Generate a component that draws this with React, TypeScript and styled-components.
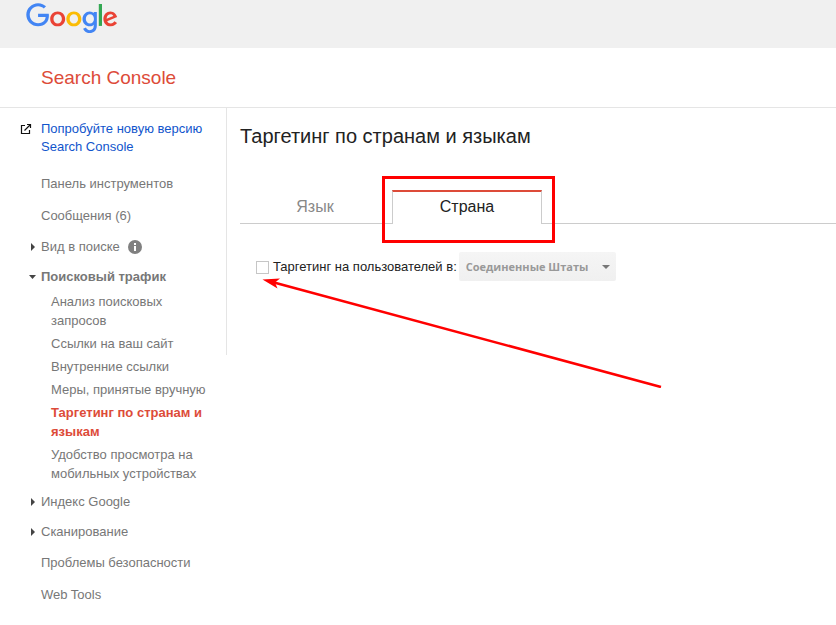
import React from "react";
import styled, { createGlobalStyle } from "styled-components";

const GlobalStyle = createGlobalStyle`
  *, *::before, *::after { box-sizing: border-box; }
  body {
    margin: 0;
    background: #fff;
    color: #222;
    font-family: "Liberation Sans", Arial, sans-serif;
    font-size: 13px;
  }
`;

const TopBar = styled.header`
  height: 48px;
  padding: 3px 26px;
  background: #f0f0f0;
`;

const LogoLink = styled.a`
  display: inline-block;
  svg { display: block; }
`;

const ProductBar = styled.div`
  height: 60px;
  padding: 0 41px;
  display: flex;
  align-items: center;
  border-bottom: 1px solid #e5e5e5;
`;

const ProductName = styled.a`
  color: #dd4b39;
  font-size: 19px;
  line-height: 24px;
  text-decoration: none;
`;

const Body = styled.div`
  display: flex;
  align-items: flex-start;
`;

const Sidebar = styled.nav`
  flex: 0 0 226px;
  padding: 12px 16px 14px 20px;
`;

const NewVersion = styled.a`
  display: flex;
  align-items: flex-start;
  gap: 9px;
  margin-bottom: 12px;
  color: #15c;
  line-height: 18px;
  text-decoration: none;
  svg { flex: none; margin-top: 3px; }
`;

const List = styled.ul`
  margin: 0;
  padding: 0;
  list-style: none;
`;

const SubList = styled(List)`
  display: flex;
  flex-direction: column;
  gap: 4px;
  padding: 0 0 4px 31px;
`;

const PlainLink = styled.a`
  display: block;
  padding-left: 21px;
  color: #777;
  line-height: 32px;
  text-decoration: none;
`;

const SubLink = styled.a<{ $current?: boolean }>`
  display: block;
  color: ${(p) => (p.$current ? "#dd4b39" : "#777")};
  font-weight: ${(p) => (p.$current ? "bold" : "normal")};
  line-height: 19px;
  text-decoration: none;
`;

const GroupRow = styled.div`
  display: flex;
  align-items: center;
  gap: 8px;
  height: 30px;
`;

const GroupButton = styled.button<{ $open?: boolean }>`
  display: flex;
  align-items: center;
  gap: 4px;
  padding: 0 0 0 8px;
  border: 0;
  background: none;
  color: #777;
  font: inherit;
  font-weight: ${(p) => (p.$open ? "bold" : "normal")};
  line-height: 30px;
  cursor: pointer;
`;

const Main = styled.main`
  position: relative;
  flex: 1;
  min-width: 0;
  min-height: 247px;
  padding: 16px 0 0 13px;
  border-left: 1px solid #e5e5e5;
`;

const Title = styled.h1`
  margin: 0 0 42px;
  font-size: 20px;
  font-weight: normal;
  line-height: 24px;
`;

const Tabs = styled.div`
  display: flex;
  gap: 2px;
  height: 34px;
  box-shadow: inset 0 -1px #ccc;
`;

const Tab = styled.button<{ $selected?: boolean }>`
  flex: 0 0 150px;
  padding: 0 0 2px;
  border: solid transparent;
  border-width: 2px 1px 0;
  border-color: ${(p) => (p.$selected ? "#dd4b39 #ccc" : "transparent")};
  background: ${(p) => (p.$selected ? "#fff" : "none")};
  color: ${(p) => (p.$selected ? "#222" : "#888")};
  font: 16px/28px "Liberation Sans", Arial, sans-serif;
  cursor: pointer;
`;

const TargetRow = styled.div`
  display: flex;
  align-items: center;
  gap: 4px;
  padding: 28px 16px 0;
`;

const Checkbox = styled.input`
  appearance: none;
  flex: none;
  width: 13px;
  height: 13px;
  margin: 2px 0 0;
  border: 1px solid #c6c6c6;
  background: #fff;
`;

const SelectFrame = styled.span`
  display: grid;
  align-items: center;
  height: 29px;
  margin-left: -2px;
  border-radius: 2px;
  background: linear-gradient(#f5f5f5, #f0f0f0);
  svg { grid-area: 1 / 1; justify-self: end; margin-right: 6px; pointer-events: none; }
`;

const Select = styled.select`
  grid-area: 1 / 1;
  appearance: none;
  width: 157px;
  height: 29px;
  padding: 0 28px 0 7px;
  border: 0;
  background: none;
  color: #999;
  opacity: 1;
  font: bold 11px "Open Sans", "Noto Sans", sans-serif;
`;

const Highlight = styled.div`
  position: absolute;
  top: 68px;
  left: 155px;
  width: 173px;
  height: 67px;
  border: 3px solid #f00;
  pointer-events: none;
`;

const Pointer = styled.svg`
  position: absolute;
  top: 162px;
  left: 33px;
  pointer-events: none;
`;

function GoogleLogo() {
  return (
    <svg width="92" height="31" viewBox="0 0 272 92" role="img" aria-label="Google">
      <path fill="#EA4335" d="M115.75 47.18c0 12.77-9.99 22.18-22.25 22.18s-22.25-9.41-22.25-22.18C71.25 34.32 81.24 25 93.5 25s22.25 9.32 22.25 22.18zm-9.74 0c0-7.98-5.79-13.44-12.51-13.44S80.99 39.2 80.99 47.18c0 7.9 5.79 13.44 12.51 13.44s12.51-5.55 12.51-13.44z" />
      <path fill="#FBBC05" d="M163.75 47.18c0 12.77-9.99 22.18-22.25 22.18s-22.25-9.41-22.25-22.18c0-12.85 9.99-22.18 22.25-22.18s22.25 9.32 22.25 22.18zm-9.74 0c0-7.98-5.79-13.44-12.51-13.44s-12.51 5.46-12.51 13.44c0 7.9 5.79 13.44 12.51 13.44s12.51-5.55 12.51-13.44z" />
      <path fill="#4285F4" d="M209.75 26.34v39.82c0 16.38-9.66 23.07-21.08 23.07-10.75 0-17.22-7.19-19.66-13.07l8.48-3.53c1.51 3.61 5.21 7.87 11.17 7.87 7.31 0 11.84-4.51 11.84-13v-3.19h-.34c-2.18 2.69-6.38 5.04-11.68 5.04-11.09 0-21.25-9.66-21.25-22.09 0-12.52 10.16-22.26 21.25-22.26 5.29 0 9.49 2.35 11.68 4.96h.34v-3.61h9.25zm-8.56 20.92c0-7.81-5.21-13.52-11.84-13.52-6.72 0-12.35 5.71-12.35 13.52 0 7.73 5.63 13.36 12.35 13.36 6.63 0 11.84-5.63 11.84-13.36z" />
      <path fill="#34A853" d="M225 3v65h-9.5V3h9.5z" />
      <path fill="#EA4335" d="M262.02 54.48l7.56 5.04c-2.44 3.61-8.32 9.83-18.48 9.83-12.6 0-22.01-9.74-22.01-22.18 0-13.19 9.49-22.18 20.92-22.18 11.51 0 17.14 9.16 18.98 14.11l1.01 2.52-29.65 12.28c2.27 4.45 5.8 6.72 10.75 6.72 4.96 0 8.4-2.44 10.92-6.14zm-23.27-7.98l19.82-8.23c-1.09-2.77-4.37-4.7-8.23-4.7-4.95 0-11.84 4.37-11.59 12.93z" />
      <path fill="#4285F4" d="M35.29 41.41V32H67c.31 1.64.47 3.58.47 5.68 0 7.06-1.93 15.79-8.15 22.01-6.05 6.3-13.78 9.66-24.02 9.66C16.32 69.35.36 53.89.36 34.91.36 15.93 16.32.47 35.3.47c10.5 0 17.98 4.12 23.6 9.49l-6.64 6.64c-4.03-3.78-9.49-6.72-16.97-6.72-13.86 0-24.7 11.17-24.7 25.03 0 13.86 10.84 25.03 24.7 25.03 8.99 0 14.11-3.61 17.39-6.89 2.66-2.66 4.41-6.46 5.1-11.65l-22.49.01z" />
    </svg>
  );
}

function ExternalIcon() {
  return (
    <svg width="12" height="12" viewBox="0 0 12 12" fill="none" stroke="#111" aria-hidden="true">
      <path d="M5 2.5H1.5v8h8V7" strokeWidth="1.2" />
      <path d="M4.5 7.5L10.5 1.5M7 1.5h3.5V5" strokeWidth="1.2" />
    </svg>
  );
}

function InfoIcon() {
  return (
    <svg width="14" height="14" viewBox="0 0 14 14" role="img" aria-label="Информация">
      <circle cx="7" cy="7" r="7" fill="#808080" />
      <path fill="#fff" d="M6 3h2v2H6zM6 6h2v5H6z" />
    </svg>
  );
}

function Caret({ open }: { open?: boolean }) {
  return (
    <svg width="9" height="8" viewBox="0 0 9 8" fill="#444" aria-hidden="true">
      <path d={open ? "M1 2h7L4.5 6z" : "M3 0v8l4-4z"} />
    </svg>
  );
}

function Group({ label, open, info, children }: {
  label: string;
  open?: boolean;
  info?: boolean;
  children?: React.ReactNode;
}) {
  return (
    <li>
      <GroupRow>
        <GroupButton type="button" $open={open} aria-expanded={!!open}>
          <Caret open={open} />
          {label}
        </GroupButton>
        {info && <InfoIcon />}
      </GroupRow>
      {children}
    </li>
  );
}

const trafficPages = [
  "Анализ поисковых запросов",
  "Ссылки на ваш сайт",
  "Внутренние ссылки",
  "Меры, принятые вручную",
  "Таргетинг по странам и языкам",
  "Удобство просмотра на мобильных устройствах",
];
const currentPage = "Таргетинг по странам и языкам";

export default function App() {
  return (
    <>
      <GlobalStyle />
      <TopBar>
        <LogoLink href="#"><GoogleLogo /></LogoLink>
      </TopBar>
      <ProductBar>
        <ProductName href="#">Search Console</ProductName>
      </ProductBar>
      <Body>
        <Sidebar>
          <NewVersion href="#">
            <ExternalIcon />
            <span>Попробуйте новую версию Search Console</span>
          </NewVersion>
          <List>
            <li><PlainLink href="#">Панель инструментов</PlainLink></li>
            <li><PlainLink href="#">Сообщения (6)</PlainLink></li>
            <Group label="Вид в поиске" info />
            <Group label="Поисковый трафик" open>
              <SubList>
                {trafficPages.map((page) => (
                  <li key={page}>
                    <SubLink
                      href="#"
                      $current={page === currentPage}
                      aria-current={page === currentPage ? "page" : undefined}
                    >
                      {page}
                    </SubLink>
                  </li>
                ))}
              </SubList>
            </Group>
            <Group label="Индекс Google" />
            <Group label="Сканирование" />
            <li><PlainLink href="#">Проблемы безопасности</PlainLink></li>
            <li><PlainLink href="#">Web Tools</PlainLink></li>
          </List>
        </Sidebar>
        <Main>
          <Title>{currentPage}</Title>
          <Tabs role="tablist">
            <Tab type="button" role="tab" aria-selected={false}>Язык</Tab>
            <Tab type="button" role="tab" aria-selected $selected>Страна</Tab>
          </Tabs>
          <TargetRow>
            <Checkbox type="checkbox" id="target-users" />
            <label htmlFor="target-users">Таргетинг на пользователей в:</label>
            <SelectFrame>
              <Select disabled aria-label="Страна" defaultValue="us">
                <option value="us">Соединенные Штаты</option>
              </Select>
              <svg width="8" height="4" viewBox="0 0 8 4" fill="#777" aria-hidden="true">
                <path d="M0 0h8L4 4z" />
              </svg>
            </SelectFrame>
          </TargetRow>
          <Highlight />
          <Pointer width="404" height="118" viewBox="0 0 404 118" aria-hidden="true">
            <path d="M14 12.500L401 117" stroke="#f00" strokeWidth="2.6" fill="none" />
            <path d="M2.500 9.500L20 8.500L15 12.500L17.500 18.500z" fill="#f00" />
          </Pointer>
        </Main>
      </Body>
    </>
  );
}
